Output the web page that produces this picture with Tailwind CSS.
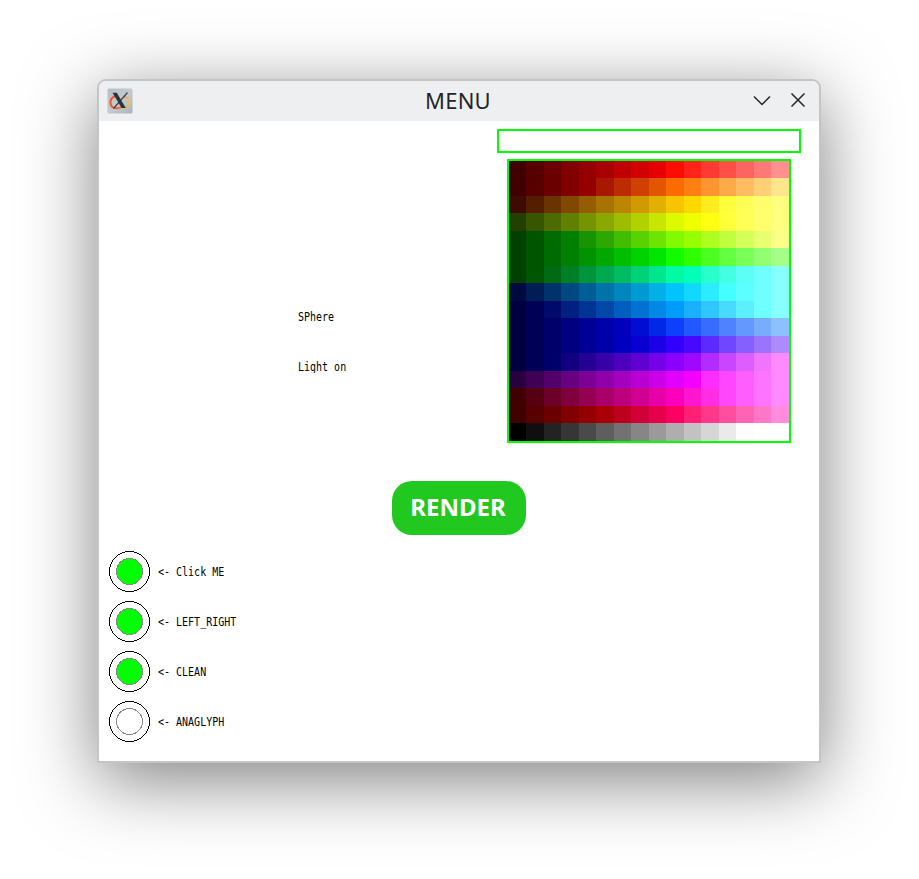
<!DOCTYPE html>
<html lang="en">
<head>
<meta charset="utf-8">
<title>MENU</title>
<script src="https://cdn.jsdelivr.net/npm/@tailwindcss/browser@4"></script>
</head>
<body class="bg-white w-[919px] h-[879px] overflow-hidden pt-[79px] pl-[97px] font-['Noto_Sans',sans-serif]">
<main class="w-[724px] h-[684px] flex flex-col border-2 border-[#c4c5c6] rounded-t-[9px] bg-white overflow-hidden shadow-[0_17px_72px_rgba(0,0,0,0.5)]">
  <header class="h-10 shrink-0 bg-[#eeeff1] grid grid-cols-[1fr_auto_1fr] items-center pl-2 pr-[11px]">
    <svg class="w-[26px] h-[26px]" viewBox="0 0 26 26" fill="none">
      <defs>
        <linearGradient id="tile" x2="1" y2="1"><stop stop-color="#b5bfc6"/><stop offset=".5" stop-color="#c4cbcf"/><stop offset="1" stop-color="#aab4ba"/></linearGradient>
        <linearGradient id="ring"><stop stop-color="#f4511e"/><stop offset=".5" stop-color="#e8703a"/><stop offset="1" stop-color="#f6c060"/></linearGradient>
      </defs>
      <rect x=".5" y=".5" width="25" height="25" rx="1.5" fill="url(#tile)"/>
      <path d="M9 8C1.500 10 1.500 20 9.500 20.200C12.500 20.300 14.500 19.500 16 18M16 8.500C23 9 24.500 15.500 19 19.500" stroke="url(#ring)" stroke-width="1.900"/>
      <path d="M20.500 4.500 6.500 20.500" stroke="#3b4045" stroke-width="1.200"/>
      <path d="M5.500 4.800H9.800L18.800 20H14.600Z" fill="#2f3439"/>
    </svg>
    <h1 class="text-[22px] leading-[38px] pb-[2px] pl-[1px] tracking-[0.2px] text-[#232629]">MENU</h1>
    <div class="flex justify-end gap-4 -mt-[2px]">
      <svg class="w-5 h-5" viewBox="0 0 20 20" fill="none" stroke="#232629" stroke-width="1.500"><path d="M2 6.500 10 14.500 18 6.500"/></svg>
      <svg class="w-5 h-5" viewBox="0 0 20 20" fill="none" stroke="#232629" stroke-width="1.500"><path d="M3.500 3.500 16.500 16.500M16.500 3.500 3.500 16.500"/></svg>
    </div>
  </header>
  <div class="flex flex-col pt-2">
    <div class="flex h-[352px]">
      <div class="w-[398px] pl-[199px] pt-[178px] flex flex-col gap-[30px] font-['DejaVu_Sans_Mono',monospace] text-[10px] leading-5 text-black">
        <span class="block whitespace-pre origin-left scale-y-[1.18]">SPhere</span>
        <span class="block whitespace-pre origin-left scale-y-[1.18]">Light on</span>
      </div>
      <div class="flex flex-col items-center gap-1.5 w-[304px]">
        <div class="w-[304px] h-6 border-2 border-[#00ff00]"></div>
        <div id="palette" class="w-[284px] h-[284px] border-2 border-[#00ff00] grid grid-cols-[repeat(8,17px_18px)] grid-rows-[repeat(8,17px_18px)]"></div>
      </div>
    </div>
    <button class="self-center w-[134px] h-[54px] rounded-[20px] bg-[#20c820] text-white text-[24px] leading-[52px] pb-[2px] pr-[2px] font-bold text-center">RENDER</button>
    <div id="options" class="flex flex-col gap-[9px] pl-[10px] pt-4 font-['DejaVu_Sans_Mono',monospace] text-[10px] leading-5 text-black"></div>
  </div>
</main>
<script>
const rows = [
"400000 560000 6b0000 800000 940000 a80000 be0000 d20000 e60000 fb0d00 ff2418 ff3a33 ff5048 ff6560 ff7a76 ff9090",
"400000 560000 6b0000 800000 940000 a81800 bd2c00 d04000 e25600 fb6c00 ff8012 ff9530 ffaa48 ffbc60 ffd076 ffe58c",
"400a00 561e00 6b3300 804800 945e00 a87300 bd8600 d29a00 e2b000 f8c400 ffd800 ffec20 fffe3c ffff55 ffff6b ffff80",
"234000 385600 4c6b00 608000 769400 8ba800 9ebd00 b2d200 c8e600 dcfb00 f0ff00 ffff14 ffff3c ffff55 ffff6b ffff80",
"004000 005600 006b00 008000 189400 2ca800 42be00 58d200 6ce600 82fb00 96ff00 acff1e c0ff3e d4ff58 e8ff70 fbff86",
"004000 005600 006b00 008000 009400 00a800 00be00 00d200 00e600 14fb00 30ff00 4cff20 64ff40 7aff5a 90ff72 a4ff88",
"004000 005600 006b12 008026 00943c 00a850 00bd64 00d278 00e68e 00fba4 00ffb8 28ffcc 44ffe2 5cfff6 70ffff 88ffff",
"000a40 001e56 00336b 004880 005e94 0073a8 0086bd 009ad2 00b0e6 00c4fb 10d8ff 2cecff 44ffff 5cffff 70ffff 88ffff",
"000040 000056 000a6b 002080 003494 0048a8 005ebe 0073d2 0088e6 009cfb 18b0ff 30c6ff 48daff 5cf0ff 70ffff 88ffff",
"000040 000056 00006b 000080 000094 0000a8 0000bd 000ed2 0028e6 0c40fb 2258ff 386cff 4e82ff 6398ff 78acff 8cc0ff",
"000040 000056 00006b 000080 000094 0000a8 0000be 0800d2 1c00e6 3000fb 4608ff 5c2aff 7046ff 8560ff 9a74ff ae8aff",
"000040 000056 00006b 100080 240094 3800a8 4c00bd 6000d2 7600e6 8a00fb 9e08ff b22cff c846ff dc5eff f074ff ff8aff",
"280040 400056 54006b 680080 7c0094 9000a8 a400be b800d2 cc00e6 e000fb f400ff ff2cff ff46ff ff5eff ff74ff ff8aff",
"400000 560014 6b0028 80003e 940052 a80068 bd007c d20092 e600a6 fb00bc ff14d0 ff2ee4 ff46fa ff5eff ff74ff ff8aff",
"400000 560000 6b0000 800000 940000 a80006 bd0020 d20038 e6004c fb0060 ff2076 ff388c ff4ea0 ff63b4 ff78c8 ff8cde",
"000000 0f0f0f 232323 363636 4a4a4a 5e5e5e 727272 868686 9a9a9a aeaeae c2c2c2 d6d6d6 eaeaea fdfdfd ffffff ffffff"];
document.getElementById('palette').innerHTML = rows.join(' ').split(' ').map(c => `<i style="background:#${c}"></i>`).join('');
const options = [['Click ME', true], ['LEFT_RIGHT', true], ['CLEAN', true], ['ANAGLYPH', false]];
document.getElementById('options').innerHTML = options.map(([label, on]) => `
  <div class="flex items-center gap-2 h-[41px]">
    <svg class="w-[41px] h-[41px]" viewBox="0 0 41 41" shape-rendering="crispEdges">
      <circle cx="20.5" cy="20.5" r="20" fill="none" stroke="#000"/>
      <circle cx="20.5" cy="20.5" r="13" fill="${on ? '#00ff00' : '#fff'}" stroke="#888"/>
    </svg>
    <span class="block whitespace-pre origin-left scale-y-[1.18]">&lt;- ${label}</span>
  </div>`).join('');
</script>
</body>
</html>
